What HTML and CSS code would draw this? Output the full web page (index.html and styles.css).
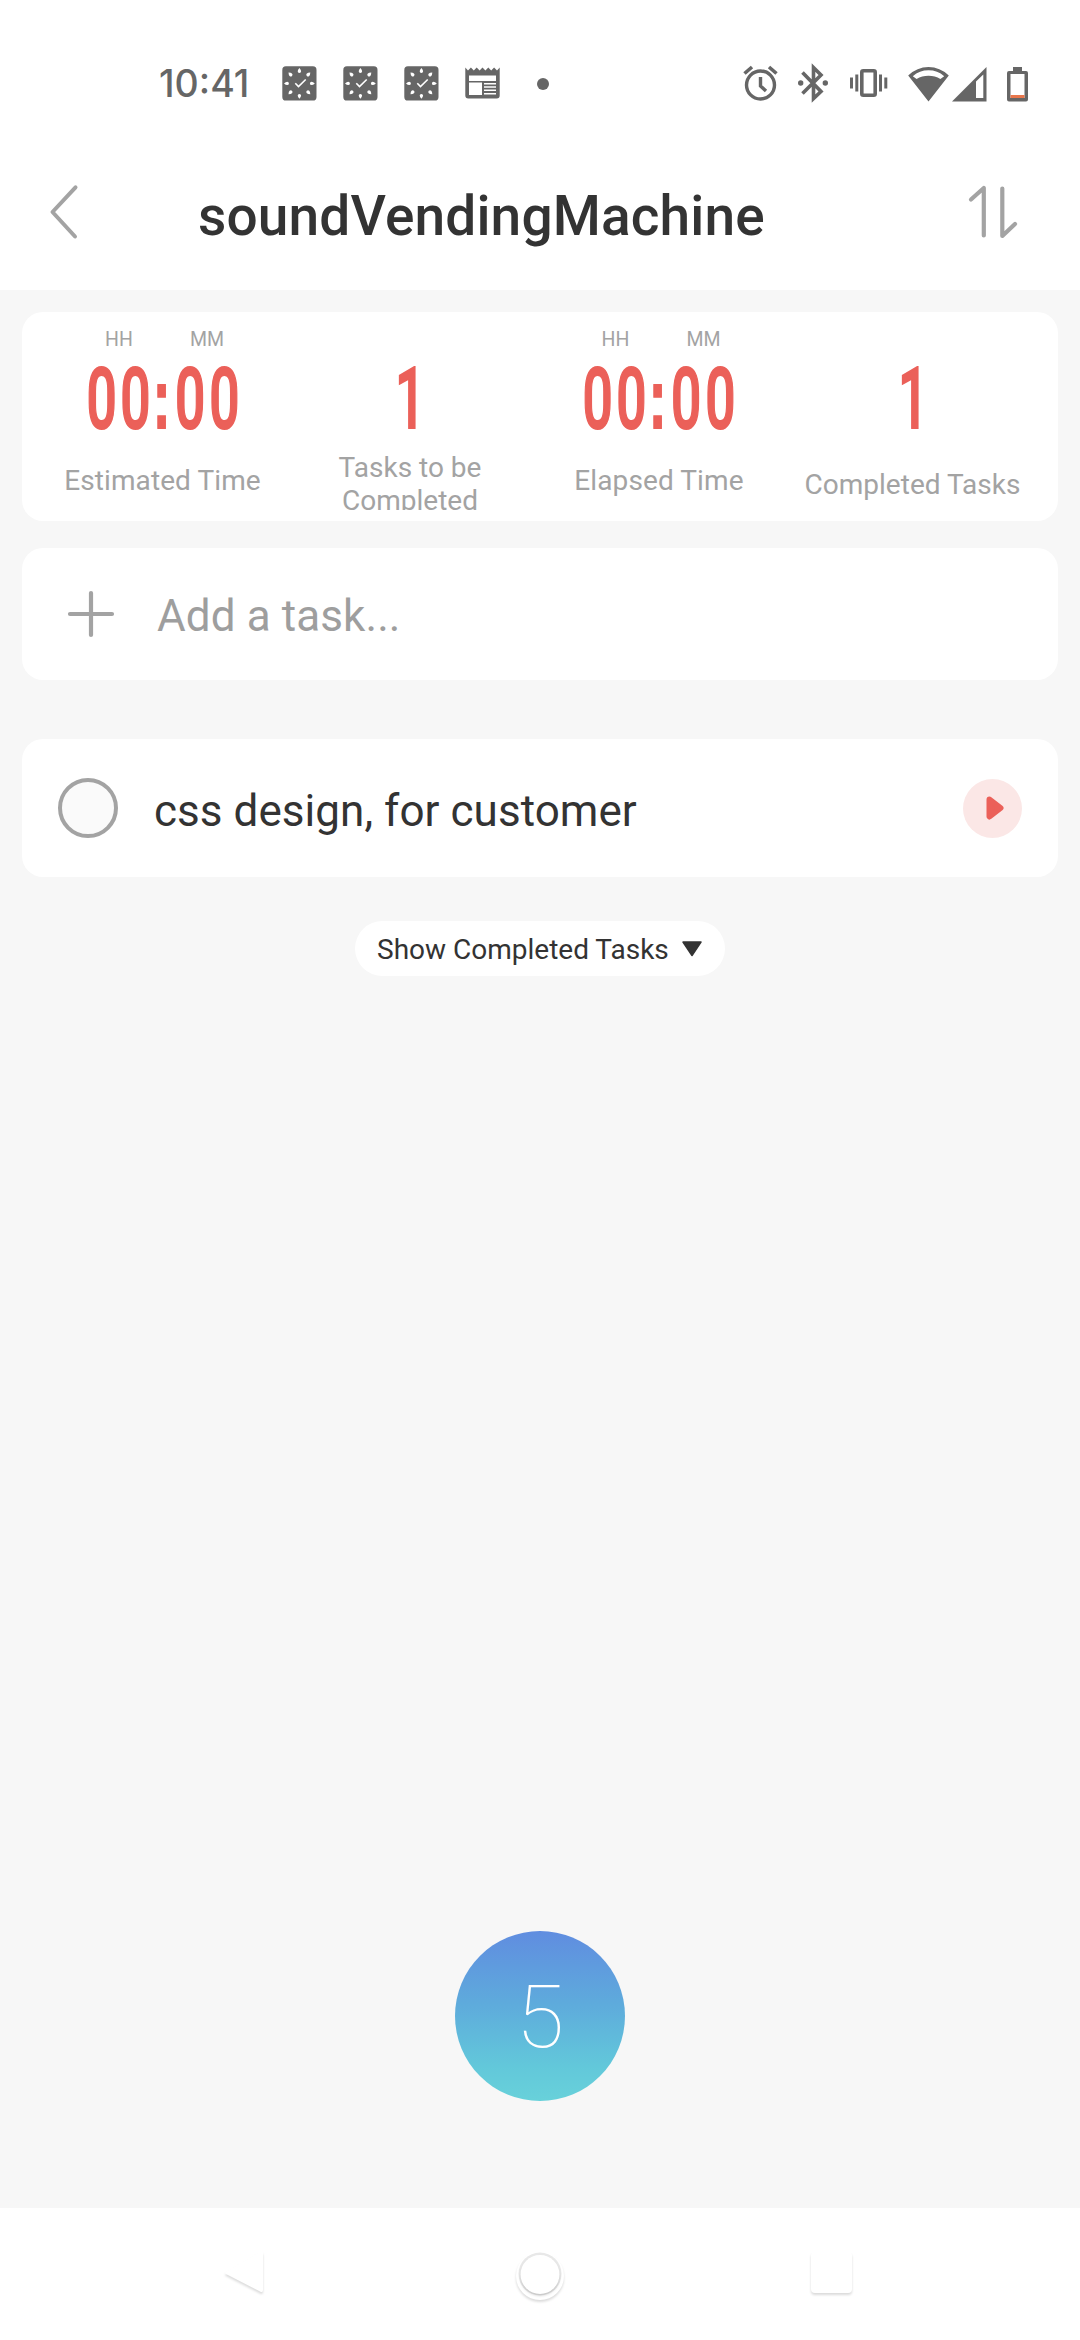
FILE: index.html
```html
<!DOCTYPE html>
<html lang="en">
<head>
<meta charset="utf-8">
<title>soundVendingMachine</title>
<link rel="stylesheet" href="styles.css">
</head>
<body>
<svg class="defs" width="0" height="0" aria-hidden="true">
  <defs>
    <symbol id="clock" viewBox="0 0 35 35">
      <rect x="0.3" y="0.3" width="34.2" height="34.2" rx="3.6" fill="#666"/>
      <g fill="#fff">
        <path id="tick" d="M17.4 2q1.700 1.800 1.700 3.200a1.700 1.700 0 0 1-3.400 0q0-1.400 1.700-3.200z"/>
        <use href="#tick" transform="rotate(45 17.400 17.400)"/>
        <use href="#tick" transform="rotate(90 17.400 17.400)"/>
        <use href="#tick" transform="rotate(135 17.400 17.400)"/>
        <use href="#tick" transform="rotate(180 17.400 17.400)"/>
        <use href="#tick" transform="rotate(225 17.400 17.400)"/>
        <use href="#tick" transform="rotate(270 17.400 17.400)"/>
        <use href="#tick" transform="rotate(315 17.400 17.400)"/>
      </g>
      <path d="M13.300 17.200l3.200 3.300 7.200-7" fill="none" stroke="#fff" stroke-width="1.600"/>
    </symbol>
  </defs>
</svg>
<div class="screen">
  <header class="top">
    <div class="status">
      <span class="time">10:41</span>
      <svg class="ic-clock first" width="35" height="35"><use href="#clock"/></svg>
      <svg class="ic-clock" width="35" height="35"><use href="#clock"/></svg>
      <svg class="ic-clock" width="35" height="35"><use href="#clock"/></svg>
      <svg class="ic-news" width="35" height="35" viewBox="0 0 35 35">
        <path fill="#666" fill-rule="evenodd" d="M0.300 1.500L3 4.500 5.900 1.500 8.800 4.500 11.700 1.500 14.600 4.500 17.500 1.500 20.400 4.500 23.300 1.500 26.200 4.500 29.100 1.500 32 4.500 34.700 1.500V29.500a3 3 0 0 1-3 3H3.300a3 3 0 0 1-3-3zM4 9.500V15H31V9.500zM4 16.500V29H17V16.500zM19 17v1.500H31V17zM19 20.300v1.500H31v-1.500zM19 23.600v1.500H31v-1.500zM19 27v1.500H31V27z"/>
      </svg>
      <span class="dot"></span>
      <svg class="ic-alarm" width="35" height="36" viewBox="0 0 35 36" fill="none" stroke="#666" stroke-width="3.400">
        <circle cx="17.500" cy="20" r="14"/>
        <path d="M17.500 12v9l5.500 5"/>
        <path d="M1.500 8.500l7.500-6.500M33.500 8.500L26 2" stroke-width="3.600"/>
      </svg>
      <svg class="ic-bt" width="30" height="36" viewBox="0 0 30 36" fill="none" stroke="#666" stroke-width="3.600">
        <path d="M4.500 7.500L23 26.500 15.500 33.500V2.500L23 10 4.500 28.500"/>
        <circle cx="2.700" cy="18" r="2.700" fill="#666" stroke="none"/>
        <circle cx="27.300" cy="18" r="2.700" fill="#666" stroke="none"/>
      </svg>
      <svg class="ic-vib" width="40" height="30" viewBox="0 0 40 30" fill="none" stroke="#666">
        <rect x="12.800" y="2.800" width="13.400" height="24.400" rx="1.500" stroke-width="3.600"/>
        <path d="M2.500 9.500v11M7.800 6.500v17M31.500 6.500v17M36.800 9.500v11" stroke-width="3"/>
      </svg>
      <svg class="ic-wifi" width="41" height="36" viewBox="0 0 41 36">
        <path fill="#666" fill-rule="evenodd" d="M20.500 35.500L0.200 9.500Q9 1 20.500 1T40.800 9.500zM4.800 10.200L8.600 13Q14 9.800 20.500 9.800T32.400 13L36.200 10.200Q29.500 4.300 20.500 4.300T4.800 10.200z"/>
      </svg>
      <svg class="ic-sig" width="35" height="36" viewBox="0 0 35 36">
        <path fill="#666" fill-rule="evenodd" d="M0 35.500L34.500 1V35.500zM24 15.500V32H31.300V8.500z"/>
      </svg>
      <svg class="ic-bat" width="21" height="36" viewBox="0 0 21 36">
        <path fill="#666" fill-rule="evenodd" d="M6 1h9v4h4a2 2 0 0 1 2 2v26.500a2 2 0 0 1-2 2H2a2 2 0 0 1-2-2V7a2 2 0 0 1 2-2h4zM3.500 8v24h14V8z"/>
        <rect x="3.500" y="29" width="14" height="3" fill="#e8764c"/>
      </svg>
    </div>
    <div class="titlebar">
      <svg class="back" width="30" height="58" viewBox="0 0 30 58" fill="none" stroke="#a3a3a3" stroke-width="4" stroke-linecap="round" stroke-linejoin="round">
        <path d="M26.500 4.300L3.500 29 26 53.500"/>
      </svg>
      <h1 class="title">soundVendingMachine</h1>
      <svg class="sort" width="52" height="56" viewBox="0 0 52 56" fill="none" stroke="#a3a3a3" stroke-width="4.200" stroke-linecap="round" stroke-linejoin="round">
        <path d="M4 15.500L16.800 4V51.500M35.300 4.500V52L48 40"/>
      </svg>
    </div>
  </header>

  <main class="content">
    <section class="card stats">
      <div class="stat">
        <div class="units"><span class="hh">HH</span><span class="mm">MM</span></div>
        <svg class="num" width="152" height="64" viewBox="0 0 152 64">
          <text class="digits" y="62" transform="scale(0.620 1)"><tspan x="-1 53.500">00</tspan><tspan class="colon" x="106">:</tspan><tspan x="142 197">00</tspan></text>
        </svg>
        <div class="label time-label">Estimated Time</div>
      </div>
      <div class="stat">
        <svg class="num lone" width="40" height="64" viewBox="0 0 40 64">
          <text class="digits" x="8" y="62" transform="scale(0.620 1)">1</text>
        </svg>
        <div class="label wrap-label">Tasks to be Completed</div>
      </div>
      <div class="stat">
        <div class="units"><span class="hh">HH</span><span class="mm">MM</span></div>
        <svg class="num" width="152" height="64" viewBox="0 0 152 64">
          <text class="digits" y="62" transform="scale(0.620 1)"><tspan x="-1 53.500">00</tspan><tspan class="colon" x="106">:</tspan><tspan x="142 197">00</tspan></text>
        </svg>
        <div class="label time-label">Elapsed Time</div>
      </div>
      <div class="stat">
        <svg class="num lone" width="40" height="64" viewBox="0 0 40 64">
          <text class="digits" x="8" y="62" transform="scale(0.620 1)">1</text>
        </svg>
        <div class="label done-label">Completed Tasks</div>
      </div>
    </section>

    <section class="card add">
      <svg class="plus" width="48" height="48" viewBox="0 0 48 48" stroke="#a3a3a3" stroke-width="4.200" stroke-linecap="round">
        <path d="M24 3V45M3 24H45"/>
      </svg>
      <span class="placeholder">Add a task...</span>
    </section>

    <section class="card task">
      <span class="check"></span>
      <span class="task-name">css design, for customer</span>
      <span class="play">
        <svg width="18" height="24" viewBox="0 0 18 24"><path d="M3.500 3.500L14.500 12 3.500 20.500z" fill="#eb6059" stroke="#eb6059" stroke-width="6" stroke-linejoin="round"/></svg>
      </span>
    </section>

    <button class="pill" type="button">
      <span>Show Completed Tasks</span>
      <svg width="20" height="16" viewBox="0 0 20 16"><path d="M1 1H19L10 14.500z" fill="#333" stroke="#333" stroke-width="1.500" stroke-linejoin="round"/></svg>
    </button>

    <div class="fab">5</div>
  </main>

  <nav class="nav">
    <svg class="nav-back" width="50" height="56" viewBox="0 0 50 56"><path d="M8 24L42 4Q45 3 45 6V42Q45 45 42 43.500L8 26Q6 25 8 24z"/></svg>
    <svg class="nav-home" width="60" height="60" viewBox="0 0 60 60">
      <circle cx="30" cy="30" r="24"/>
      <circle class="rim" cx="30" cy="28" r="21.500"/>
      <circle cx="30" cy="28.500" r="19.500"/>
    </svg>
    <svg class="nav-recent" width="54" height="56" viewBox="0 0 54 56"><rect x="6" y="4" width="41" height="41" rx="4"/></svg>
  </nav>
</div>
</body>
</html>
```
FILE: styles.css
```css
* { box-sizing: border-box; }
body { margin: 0; font-family: Roboto, "Liberation Sans", sans-serif; color: #333; background: #f7f7f7; }
svg { display: block; flex: none; overflow: visible; }
.defs { position: absolute; }
.screen { width: 1080px; height: 2340px; display: flex; flex-direction: column; background: #f7f7f7; overflow: hidden; }

.top { height: 290px; background: #fff; }
.status { height: 134px; padding: 33px 52px 0 159px; display: flex; align-items: center; }
.time { width: 90px; font: 500 37.500px/40px Inter, sans-serif; color: #666; white-space: nowrap; }
.ic-clock { margin-left: 26px; }
.ic-clock.first { margin-left: 33px; }
.ic-news { margin-left: 26px; }
.dot { width: 12px; height: 12px; margin-left: 37px; border-radius: 50%; background: #666; }
.ic-alarm { margin-left: auto; margin-top: -2px; }
.ic-bt { margin-left: 20px; margin-top: -2px; }
.ic-vib { margin-left: 21px; margin-top: -1px; }
.ic-wifi { margin-left: 19px; }
.ic-sig { margin-left: 3px; }
.ic-bat { margin-left: 20px; }

.titlebar { height: 156px; padding: 0 61px 0 49px; display: flex; align-items: center; }
.title { margin: 8px 0 0 119px; font-size: 55px; font-weight: 500; line-height: 64px; letter-spacing: 0.150px; white-space: nowrap; }
.sort { margin-left: auto; }

.content { flex: 1; padding: 22px 22px 0; display: flex; flex-direction: column; }
.card { background: #fff; border-radius: 21px; }

.stats { height: 209px; padding-top: 15px; display: grid; grid-template-columns: 281px 214px 284px 223px; align-items: start; color: #a3a3a3; }
.stat { display: flex; flex-direction: column; align-items: center; }
.units { height: 26px; display: flex; gap: 55px; font-size: 19.500px; line-height: 26px; }
.hh, .mm { width: 32px; text-align: center; }
.num { margin-top: 13px; }
.num.lone { margin-top: 39px; }
.digits { font-family: Roboto, sans-serif; font-size: 86px; font-weight: 500; fill: #eb6059; stroke: #eb6059; stroke-width: 1.800px; }
.colon { font-family: "Liberation Sans", sans-serif; font-weight: 700; }
.label { font-size: 28px; line-height: 33px; text-align: center; }
.time-label { margin-top: 34px; letter-spacing: 0.100px; }
.wrap-label { width: 170px; height: 59px; margin-top: 21px; overflow: hidden; }
.done-label { margin-top: 38px; white-space: nowrap; }

.add { height: 132px; margin-top: 27px; padding-left: 45px; display: flex; align-items: center; }
.placeholder { margin: 4px 0 0 42px; font-size: 44px; line-height: 52px; letter-spacing: 0.100px; color: #9e9e9e; }

.task { height: 138px; margin-top: 59px; padding: 0 36px; display: flex; align-items: center; }
.check { width: 60px; height: 60px; border: 4px solid #a3a3a3; border-radius: 50%; background: #fafafa; }
.task-name { margin: 5px 0 0 36px; font-size: 44px; line-height: 52px; letter-spacing: 0.050px; }
.play { width: 59px; height: 59px; margin-left: auto; padding-left: 4px; border-radius: 50%; background: #fbe7e6; display: flex; align-items: center; justify-content: center; }

.pill { align-self: center; width: 370px; height: 55px; margin-top: 44px; padding: 1px 23px 0 22px; border: 0; border-radius: 28px; background: #fff; display: flex; align-items: center; justify-content: space-between; font: 400 28px/33px Roboto, sans-serif; color: #333; white-space: nowrap; }

.fab { width: 170px; height: 170px; margin: auto auto 107px; border-radius: 50%; background: linear-gradient(#608de0, #5eaadc 42%, #62c8da 80%, #68d1da); color: #fff; font-size: 88px; font-weight: 100; line-height: 172px; text-align: center; }

.nav { height: 132px; background: #fff; padding: 4px 221px 0 218px; display: grid; grid-template-columns: 50px 60px 54px; align-items: center; justify-content: space-between; }
.nav-home { margin-left: 3px; }
.nav path, .nav rect, .nav circle { fill: #fff; filter: drop-shadow(0 2px 1px rgba(0,0,0,.14)); }
.nav .rim { fill: #e8e8e8; filter: none; }
```
